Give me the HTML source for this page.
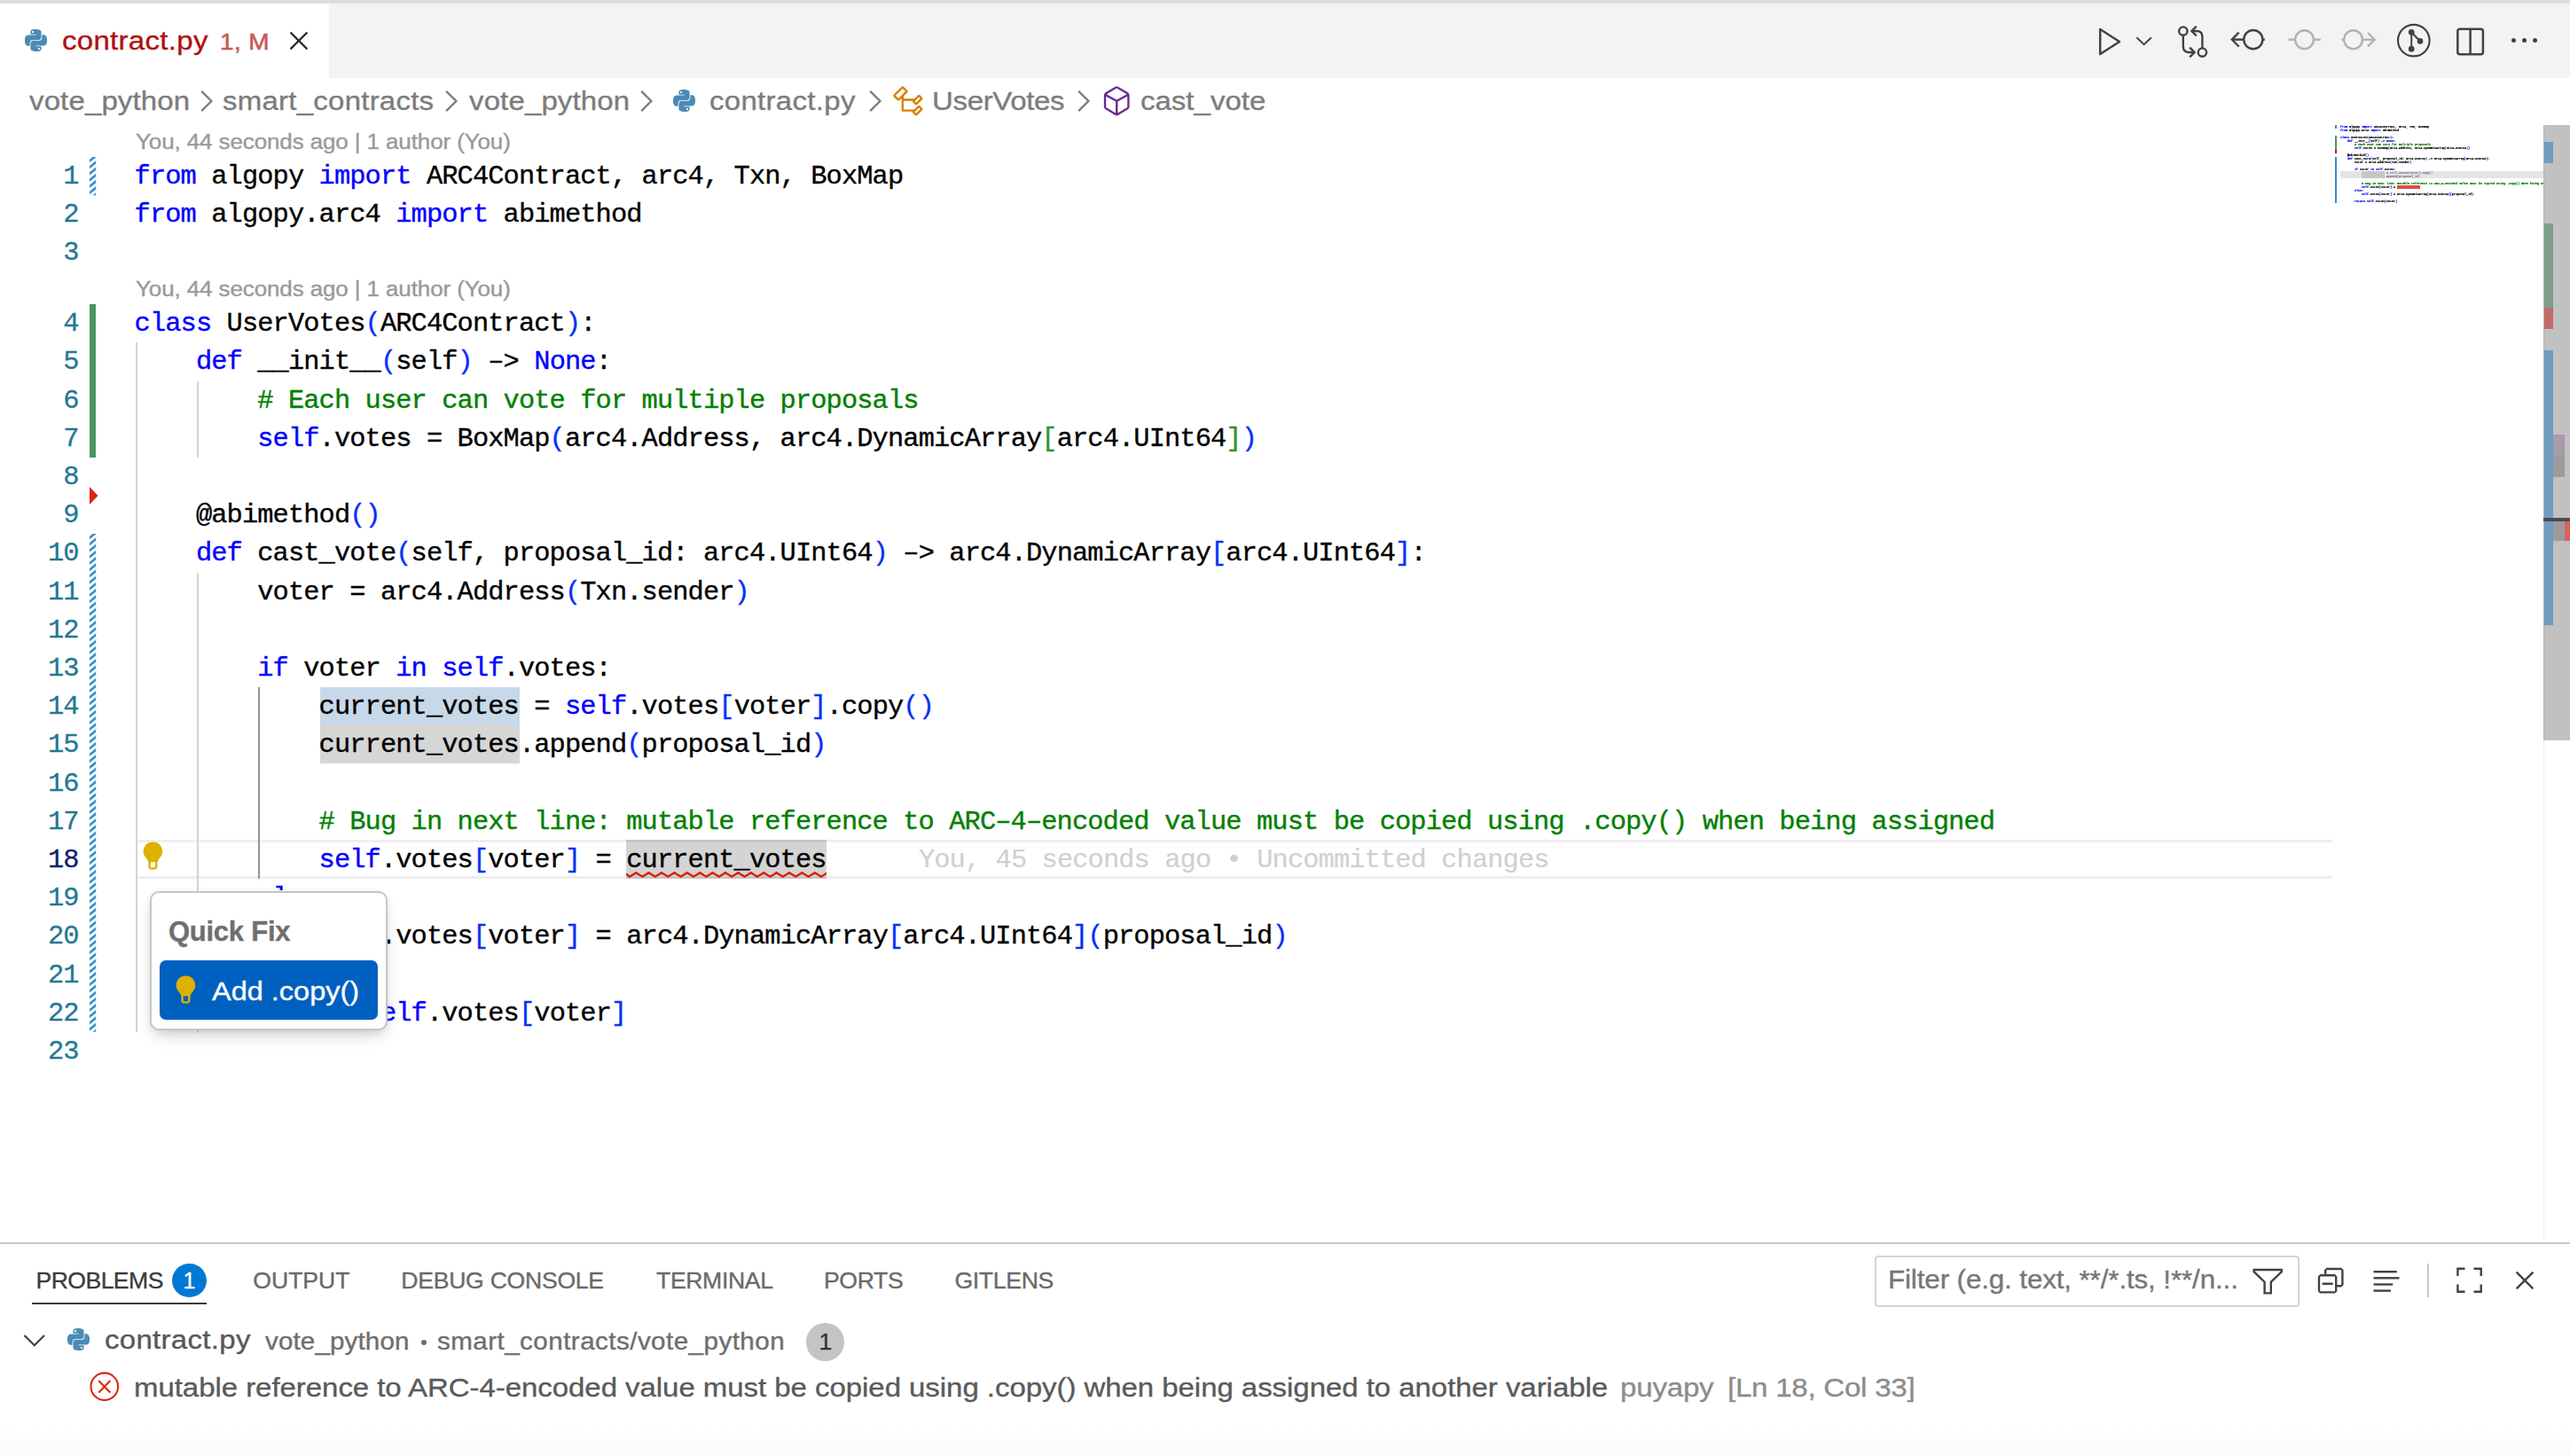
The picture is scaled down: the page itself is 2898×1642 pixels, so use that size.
<!DOCTYPE html>
<html><head><meta charset="utf-8"><title>contract.py</title>
<style>
html,body{margin:0;padding:0;background:#fff;}
body{width:2898px;height:1642px;overflow:hidden;position:relative;font-family:"Liberation Sans",sans-serif;}
.abs{position:absolute;}
.t{position:absolute;white-space:pre;line-height:1;-webkit-text-stroke:0.35px currentColor;}
.mono{font-family:"Liberation Mono",monospace;}
.cl{position:absolute;left:151.55px;height:43.2px;line-height:43.2px;white-space:pre;font-family:"Liberation Mono",monospace;font-size:30.4px;letter-spacing:-0.9030px;color:#000;-webkit-text-stroke:0.35px currentColor;}
.k{color:#0000ff}.c{color:#008000}.b1{color:#0431fa}.b2{color:#319331}
.ln{position:absolute;left:0;width:88.6px;text-align:right;height:43.2px;line-height:43.2px;font-family:"Liberation Mono",monospace;font-size:30.4px;letter-spacing:-0.9030px;color:#237893;-webkit-text-stroke:0.3px currentColor;}
svg{position:absolute;overflow:visible;}
</style></head><body>
<div class="abs" style="left:0;top:0;width:2898px;height:4px;background:#dcdcdc"></div>
<div class="abs" style="left:0;top:4px;width:2898px;height:84px;background:#f3f3f3"></div>
<div class="abs" style="left:0;top:4px;width:371px;height:84px;background:#fff"></div>
<svg style="left:28px;top:33px" width="25" height="25" viewBox="0 0 24 24"><path fill="#4b8bb5" d="M14.25.18l.9.2.73.26.59.3.45.32.34.34.25.34.16.33.1.3.04.26.02.2-.01.13V8.5l-.05.63-.13.55-.21.46-.26.38-.3.31-.33.25-.35.19-.35.14-.33.1-.3.07-.26.04-.21.02H8.77l-.69.05-.59.14-.5.22-.41.27-.33.32-.27.35-.2.36-.15.37-.1.35-.07.32-.04.27-.02.21v3.06H3.17l-.21-.03-.28-.07-.32-.12-.35-.18-.36-.26-.36-.36-.35-.46-.32-.59-.28-.73-.21-.88-.14-1.05-.05-1.23.06-1.22.16-1.04.24-.87.32-.71.36-.57.4-.44.42-.33.42-.24.4-.16.36-.1.32-.05.24-.01h.16l.06.01h8.16v-.83H6.18l-.01-2.75-.02-.37.05-.34.11-.31.17-.28.25-.26.31-.23.38-.2.44-.18.51-.15.58-.12.64-.1.71-.06.77-.04.84-.02 1.27.05zm-6.3 1.98l-.23.33-.08.41.08.41.23.34.33.22.41.09.41-.09.33-.22.23-.34.08-.41-.08-.41-.23-.33-.33-.22-.41-.09-.41.09zm13.09 3.95l.28.06.32.12.35.18.36.27.36.35.35.47.32.59.28.73.21.88.14 1.04.05 1.23-.06 1.23-.16 1.04-.24.86-.32.71-.36.57-.4.45-.42.33-.42.24-.4.16-.36.09-.32.05-.24.02-.16-.01h-8.22v.82h5.84l.01 2.76.02.36-.05.34-.11.31-.17.29-.25.25-.31.24-.38.2-.44.17-.51.15-.58.13-.64.09-.71.07-.77.04-.84.01-1.27-.04-1.07-.14-.9-.2-.73-.25-.59-.3-.45-.33-.34-.34-.25-.34-.16-.33-.1-.3-.04-.25-.02-.2.01-.13v-5.34l.05-.64.13-.54.21-.46.26-.38.3-.32.33-.24.35-.2.35-.14.33-.1.3-.06.26-.04.21-.02.13-.01h5.84l.69-.05.59-.14.5-.21.41-.28.33-.32.27-.35.2-.36.15-.36.1-.35.07-.32.04-.28.02-.21V6.07h2.09l.14.01zm-6.47 14.25l-.23.33-.08.41.08.41.23.33.33.23.41.08.41-.08.33-.23.23-.33.08-.41-.08-.41-.23-.33-.33-.23-.41-.08-.41.08z"/></svg>
<div class="t " style="left:70.3px;top:31.10px;font-size:30.36px;color:#b01011;transform-origin:0 0;transform:scaleX(1.0870);letter-spacing:0.276px;">contract.py</div>
<div class="t " style="left:247.8px;top:34.99px;font-size:25.76px;color:#c65b59;transform-origin:0 0;transform:scaleX(1.0870);letter-spacing:0.368px;-webkit-text-stroke:0.55px #c65b59;">1, M</div>
<svg style="left:318.1px;top:26.8px" width="37.9" height="37.9" viewBox="0 0 16 16"><path fill="#2b2b2b" fill-rule="evenodd" clip-rule="evenodd" d="M8 8.707l3.646 3.647.708-.707L8.707 8l3.647-3.646-.707-.708L8 7.293 4.354 3.646l-.707.708L7.293 8l-3.646 3.646.707.708L8 8.707z" /></svg>
<div class="t " style="left:32.5px;top:98.50px;font-size:30.36px;color:#7c7c7c;transform-origin:0 0;transform:scaleX(1.0870);letter-spacing:0.120px;">vote_python</div>
<div class="t " style="left:251.2px;top:98.50px;font-size:30.36px;color:#7c7c7c;transform-origin:0 0;transform:scaleX(1.0870);letter-spacing:0.221px;">smart_contracts</div>
<div class="t " style="left:529.3px;top:98.50px;font-size:30.36px;color:#7c7c7c;transform-origin:0 0;transform:scaleX(1.0870);letter-spacing:0.120px;">vote_python</div>
<svg style="left:758.5px;top:101px" width="25" height="25" viewBox="0 0 24 24"><path fill="#4b8bb5" d="M14.25.18l.9.2.73.26.59.3.45.32.34.34.25.34.16.33.1.3.04.26.02.2-.01.13V8.5l-.05.63-.13.55-.21.46-.26.38-.3.31-.33.25-.35.19-.35.14-.33.1-.3.07-.26.04-.21.02H8.77l-.69.05-.59.14-.5.22-.41.27-.33.32-.27.35-.2.36-.15.37-.1.35-.07.32-.04.27-.02.21v3.06H3.17l-.21-.03-.28-.07-.32-.12-.35-.18-.36-.26-.36-.36-.35-.46-.32-.59-.28-.73-.21-.88-.14-1.05-.05-1.23.06-1.22.16-1.04.24-.87.32-.71.36-.57.4-.44.42-.33.42-.24.4-.16.36-.1.32-.05.24-.01h.16l.06.01h8.16v-.83H6.18l-.01-2.75-.02-.37.05-.34.11-.31.17-.28.25-.26.31-.23.38-.2.44-.18.51-.15.58-.12.64-.1.71-.06.77-.04.84-.02 1.27.05zm-6.3 1.98l-.23.33-.08.41.08.41.23.34.33.22.41.09.41-.09.33-.22.23-.34.08-.41-.08-.41-.23-.33-.33-.22-.41-.09-.41.09zm13.09 3.95l.28.06.32.12.35.18.36.27.36.35.35.47.32.59.28.73.21.88.14 1.04.05 1.23-.06 1.23-.16 1.04-.24.86-.32.71-.36.57-.4.45-.42.33-.42.24-.4.16-.36.09-.32.05-.24.02-.16-.01h-8.22v.82h5.84l.01 2.76.02.36-.05.34-.11.31-.17.29-.25.25-.31.24-.38.2-.44.17-.51.15-.58.13-.64.09-.71.07-.77.04-.84.01-1.27-.04-1.07-.14-.9-.2-.73-.25-.59-.3-.45-.33-.34-.34-.25-.34-.16-.33-.1-.3-.04-.25-.02-.2.01-.13v-5.34l.05-.64.13-.54.21-.46.26-.38.3-.32.33-.24.35-.2.35-.14.33-.1.3-.06.26-.04.21-.02.13-.01h5.84l.69-.05.59-.14.5-.21.41-.28.33-.32.27-.35.2-.36.15-.36.1-.35.07-.32.04-.28.02-.21V6.07h2.09l.14.01zm-6.47 14.25l-.23.33-.08.41.08.41.23.33.33.23.41.08.41-.08.33-.23.23-.33.08-.41-.08-.41-.23-.33-.33-.23-.41-.08-.41.08z"/></svg>
<div class="t " style="left:800.4px;top:98.50px;font-size:30.36px;color:#7c7c7c;transform-origin:0 0;transform:scaleX(1.0870);letter-spacing:0.276px;">contract.py</div>
<div class="t " style="left:1050.5px;top:98.50px;font-size:30.36px;color:#7c7c7c;transform-origin:0 0;transform:scaleX(1.0870);letter-spacing:-0.313px;">UserVotes</div>
<div class="t " style="left:1286px;top:98.50px;font-size:30.36px;color:#7c7c7c;transform-origin:0 0;transform:scaleX(1.0870);">cast_vote</div>
<svg style="left:225.6px;top:100px" width="14" height="28" viewBox="0 0 14 28"><path d="M1.2 2.9 L12.4 14 L1.2 25.1" fill="none" stroke="#7c7c7c" stroke-width="2.3"/></svg>
<svg style="left:502.4px;top:100px" width="14" height="28" viewBox="0 0 14 28"><path d="M1.2 2.9 L12.4 14 L1.2 25.1" fill="none" stroke="#7c7c7c" stroke-width="2.3"/></svg>
<svg style="left:722.4px;top:100px" width="14" height="28" viewBox="0 0 14 28"><path d="M1.2 2.9 L12.4 14 L1.2 25.1" fill="none" stroke="#7c7c7c" stroke-width="2.3"/></svg>
<svg style="left:980px;top:100px" width="14" height="28" viewBox="0 0 14 28"><path d="M1.2 2.9 L12.4 14 L1.2 25.1" fill="none" stroke="#7c7c7c" stroke-width="2.3"/></svg>
<svg style="left:1214.5px;top:100px" width="14" height="28" viewBox="0 0 14 28"><path d="M1.2 2.9 L12.4 14 L1.2 25.1" fill="none" stroke="#7c7c7c" stroke-width="2.3"/></svg>
<svg style="left:1005px;top:95px" width="38.4" height="38.4" viewBox="0 0 16 16"><path fill="#d67e00" fill-rule="evenodd" clip-rule="evenodd" d="M11.34 9.71h.71l2.67-2.67v-.71L13.38 5h-.7l-1.82 1.81h-5V5.56l1.86-1.85V3l-2-2H5L1 5v.71l2 2h.71l1.14-1.15v5.79l.5.5H10v.52l1.33 1.34h.71l2.67-2.67v-.71L13.37 10h-.7l-1.86 1.85h-5v-4H10v.48l1.34 1.38zm1.69-3.65l.63.63-2 2-.63-.63 2-2zm0 5l.63.63-2 2-.63-.63 2-2zM3.35 6.65l-1.29-1.3 3.29-3.29 1.3 1.29-3.3 3.3z" /></svg>
<svg style="left:1240px;top:94.5px" width="38.4" height="38.4" viewBox="0 0 16 16"><path fill="#652d90" fill-rule="evenodd" clip-rule="evenodd" d="M13.51 4l-5-3h-1l-5 3-.49.86v6l.49.85 5 3h1l5-3 .49-.85v-6L13.51 4zm-6 9.56l-4.5-2.7V5.7l4.5 2.45v5.41zM3.27 4.7l4.74-2.84 4.74 2.84-4.74 2.59L3.27 4.7zm9.74 6.16l-4.5 2.7V8.15l4.5-2.45v5.16z" /></svg>
<svg style="left:2364px;top:28px" width="32" height="38" viewBox="0 0 32 38"><path d="M4.2 5 L26 19 L4.2 33 Z" fill="none" stroke="#424242" stroke-width="2.5" stroke-linejoin="round"/></svg>
<svg style="left:2407px;top:40px" width="22" height="14" viewBox="0 0 22 14"><path d="M2.4 2.2 L10.6 10.2 L18.9 2.2" fill="none" stroke="#424242" stroke-width="1.9"/></svg>
<svg style="left:2452px;top:26px" width="42" height="42" viewBox="0 0 42 42"><g fill="none" stroke="#424242" stroke-width="2.4">
<circle cx="9.8" cy="9.1" r="4.7"/><circle cx="31.4" cy="33.1" r="4.7"/>
<path d="M9.8 13.8 V26 Q9.8 33 16.5 33 H21.5"/><path d="M17.2 27.6 L22.6 33 L17.2 38.4"/>
<path d="M31.4 28.4 V15.6 Q31.4 9 25 9 H20.5"/><path d="M24.8 3.6 L19.4 9 L24.8 14.4"/></g></svg>
<svg style="left:2512px;top:28px" width="46" height="34" viewBox="0 0 46 34"><g fill="none" stroke="#424242" stroke-width="2.4">
<circle cx="28.8" cy="16.6" r="10.6"/><path d="M5 16.6 H18.2"/><path d="M12.6 8.7 L4.8 16.6 L12.6 24.5"/><path d="M39.4 16.6 H41.8"/></g></svg>
<svg style="left:2578px;top:28px" width="42" height="34" viewBox="0 0 42 34"><g fill="none" stroke="#b2b2b2" stroke-width="2.4">
<circle cx="20.5" cy="16.7" r="10.4"/><path d="M2.5 16.7 H10"/><path d="M31 16.7 H38.8"/></g></svg>
<svg style="left:2638px;top:28px" width="46" height="34" viewBox="0 0 46 34"><g fill="none" stroke="#b2b2b2" stroke-width="2.4">
<circle cx="15.6" cy="16.7" r="10.4"/><path d="M2.2 16.7 H5"/><path d="M26 16.7 H39.5"/><path d="M32 9 L39.8 16.7 L32 24.4"/></g></svg>
<svg style="left:2701px;top:25px" width="42" height="42" viewBox="0 0 42 42"><g fill="none" stroke="#424242" stroke-width="2.2">
<circle cx="20.8" cy="20.6" r="17.8"/><path d="M18.2 11.5 V30" stroke-width="2"/><path d="M18.8 12 L27.5 21" stroke-width="2"/></g>
<circle cx="18.2" cy="11.3" r="3.4" fill="#424242"/><circle cx="18.2" cy="30.2" r="3.4" fill="#424242"/><circle cx="28" cy="21.4" r="3.3" fill="#424242"/></svg>
<svg style="left:2768px;top:29px" width="36" height="36" viewBox="0 0 36 36"><g fill="none" stroke="#424242" stroke-width="2.5">
<rect x="3.3" y="3.7" width="28.6" height="28.6" rx="2.5"/><path d="M17.6 3.7 V32.3"/></g></svg>
<div class="abs" style="left:2832.4px;top:43.2px;width:5px;height:5px;border-radius:50%;background:#424242"></div>
<div class="abs" style="left:2844.4px;top:43.2px;width:5px;height:5px;border-radius:50%;background:#424242"></div>
<div class="abs" style="left:2856.4px;top:43.2px;width:5px;height:5px;border-radius:50%;background:#424242"></div>
<div class="t " style="left:152.9px;top:147.55px;font-size:23.92px;color:#999999;transform-origin:0 0;transform:scaleX(1.0870);letter-spacing:-0.101px;">You, 44 seconds ago | 1 author (You)</div>
<div class="t " style="left:152.9px;top:313.75px;font-size:23.92px;color:#999999;transform-origin:0 0;transform:scaleX(1.0870);letter-spacing:-0.101px;">You, 44 seconds ago | 1 author (You)</div>
<div class="abs" style="left:361.0px;top:774.9px;width:224.9px;height:43.3px;background:#c7d9e8"></div>
<div class="abs" style="left:361.0px;top:818.2px;width:224.9px;height:43.0px;background:#d6d6d6"></div>
<div class="abs" style="left:706.0px;top:946.9px;width:226px;height:43.8px;background:#d4d4d4"></div>
<div class="abs" style="left:153.5px;top:947.0px;width:2476.5px;height:43.8px;box-sizing:border-box;border-top:3.4px solid rgba(0,0,0,0.067);border-bottom:3.2px solid rgba(0,0,0,0.067)"></div>
<div class="abs" style="left:152.5px;top:386.3px;width:2px;height:777.6px;background:#d3d3d3"></div>
<div class="abs" style="left:221.6px;top:429.5px;width:2px;height:86.4px;background:#d3d3d3"></div>
<div class="abs" style="left:221.6px;top:645.5px;width:2px;height:518.4px;background:#d3d3d3"></div>
<div class="abs" style="left:290.8px;top:775.1px;width:2.2px;height:216.0px;background:#939393"></div>
<svg width="0" height="0" style="left:0;top:0"><defs><pattern id="hat" width="7.2" height="7.2" patternUnits="userSpaceOnUse"><path d="M0 2.85 L7.2 -2.85 L7.2 0.4 L0 6.15 Z M0 10.05 L7.2 4.35 L7.2 7.6 L0 13.35 Z" fill="#2986c9"/></pattern></defs></svg>
<svg style="left:100.9px;top:177.0px" width="7.2" height="43.2"><rect width="7.2" height="43.2" fill="url(#hat)"/></svg>
<svg style="left:100.9px;top:602.0px" width="7.2" height="561.6"><rect width="7.2" height="561.6" fill="url(#hat)"/></svg>
<div class="abs" style="left:101.2px;top:343.1px;width:7px;height:172.8px;background:#48985d"></div>
<svg style="left:101px;top:549.1px" width="10" height="20" viewBox="0 0 10 20"><path d="M0 0 L9.5 10 L0 20 Z" fill="#dc2513"/></svg>
<div class="ln" style="top:178.0px;color:#237893">1</div>
<div class="cl" style="top:178.0px"><span class="k">from</span> algopy <span class="k">import</span> ARC4Contract, arc4, Txn, BoxMap</div>
<div class="ln" style="top:221.2px;color:#237893">2</div>
<div class="cl" style="top:221.2px"><span class="k">from</span> algopy.arc4 <span class="k">import</span> abimethod</div>
<div class="ln" style="top:264.4px;color:#237893">3</div>
<div class="ln" style="top:344.1px;color:#237893">4</div>
<div class="cl" style="top:344.1px"><span class="k">class</span> UserVotes<span class="b1">(</span>ARC4Contract<span class="b1">)</span>:</div>
<div class="ln" style="top:387.3px;color:#237893">5</div>
<div class="cl" style="top:387.3px">    <span class="k">def</span> __init__<span class="b1">(</span>self<span class="b1">)</span> –&gt; <span class="k">None</span>:</div>
<div class="ln" style="top:430.5px;color:#237893">6</div>
<div class="cl" style="top:430.5px">        <span class="c"># Each user can vote for multiple proposals</span></div>
<div class="ln" style="top:473.7px;color:#237893">7</div>
<div class="cl" style="top:473.7px">        <span class="k">self</span>.votes = BoxMap<span class="b1">(</span>arc4.Address, arc4.DynamicArray<span class="b2">[</span>arc4.UInt64<span class="b2">]</span><span class="b1">)</span></div>
<div class="ln" style="top:516.9px;color:#237893">8</div>
<div class="ln" style="top:560.1px;color:#237893">9</div>
<div class="cl" style="top:560.1px">    @abimethod<span class="b1">()</span></div>
<div class="ln" style="top:603.3px;color:#237893">10</div>
<div class="cl" style="top:603.3px">    <span class="k">def</span> cast_vote<span class="b1">(</span>self, proposal_id: arc4.UInt64<span class="b1">)</span> –&gt; arc4.DynamicArray<span class="b1">[</span>arc4.UInt64<span class="b1">]</span>:</div>
<div class="ln" style="top:646.5px;color:#237893">11</div>
<div class="cl" style="top:646.5px">        voter = arc4.Address<span class="b1">(</span>Txn.sender<span class="b1">)</span></div>
<div class="ln" style="top:689.7px;color:#237893">12</div>
<div class="ln" style="top:732.9px;color:#237893">13</div>
<div class="cl" style="top:732.9px">        <span class="k">if</span> voter <span class="k">in</span> <span class="k">self</span>.votes:</div>
<div class="ln" style="top:776.1px;color:#237893">14</div>
<div class="cl" style="top:776.1px">            current_votes = <span class="k">self</span>.votes<span class="b1">[</span>voter<span class="b1">]</span>.copy<span class="b1">()</span></div>
<div class="ln" style="top:819.3px;color:#237893">15</div>
<div class="cl" style="top:819.3px">            current_votes.append<span class="b1">(</span>proposal_id<span class="b1">)</span></div>
<div class="ln" style="top:862.5px;color:#237893">16</div>
<div class="ln" style="top:905.7px;color:#237893">17</div>
<div class="cl" style="top:905.7px">            <span class="c"># Bug in next line: mutable reference to ARC–4–encoded value must be copied using .copy() when being assigned</span></div>
<div class="ln" style="top:948.9px;color:#0b216f">18</div>
<div class="cl" style="top:948.9px">            <span class="k">self</span>.votes<span class="b1">[</span>voter<span class="b1">]</span> = current_votes</div>
<div class="ln" style="top:992.1px;color:#237893">19</div>
<div class="cl" style="top:992.1px;overflow:hidden;height:12.4px">        <span class="k">else</span>:</div>
<div class="ln" style="top:1035.3px;color:#237893">20</div>
<div class="cl" style="top:1035.3px">            <span class="k">self</span>.votes<span class="b1">[</span>voter<span class="b1">]</span> = arc4.DynamicArray<span class="b1">[</span>arc4.UInt64<span class="b1">]</span><span class="b1">(</span>proposal_id<span class="b1">)</span></div>
<div class="ln" style="top:1078.5px;color:#237893">21</div>
<div class="ln" style="top:1121.7px;color:#237893">22</div>
<div class="cl" style="top:1121.7px">        <span class="k">return</span> <span class="k">self</span>.votes<span class="b1">[</span>voter<span class="b1">]</span></div>
<div class="ln" style="top:1164.9px;color:#237893">23</div>
<div class="cl" style="top:948.9px;left:1035.9px;color:#d0d0d0;-webkit-text-stroke:0.2px #d0d0d0">You, 45 seconds ago • Uncommitted changes</div>
<svg style="left:706.0px;top:982px;overflow:hidden" width="226.0" height="9" viewBox="0 0 226.0 9"><path d="M0 3.5 L4.0 6.7 L11.2 2.2 L18.4 6.7 L25.6 2.2 L32.8 6.7 L40.0 2.2 L47.2 6.7 L54.4 2.2 L61.6 6.7 L68.8 2.2 L76.0 6.7 L83.2 2.2 L90.4 6.7 L97.6 2.2 L104.8 6.7 L112.0 2.2 L119.2 6.7 L126.4 2.2 L133.6 6.7 L140.8 2.2 L148.0 6.7 L155.2 2.2 L162.4 6.7 L169.6 2.2 L176.8 6.7 L184.0 2.2 L191.2 6.7 L198.4 2.2 L205.6 6.7 L212.8 2.2 L220.0 6.7 L227.2 2.2" fill="none" stroke="#de1c02" stroke-width="2.4" stroke-linejoin="miter"/></svg>
<svg style="left:152px;top:946.5px" width="38.4" height="38.4" viewBox="0 0 16 16"><path fill="#ddb100" fill-rule="evenodd" clip-rule="evenodd" d="M11.67 8.658a3.661 3.661 0 0 0-.781 1.114 3.28 3.28 0 0 0-.268 1.329v1.6a1.304 1.304 0 0 1-.794 1.197 1.282 1.282 0 0 1-.509.102H7.712a1.285 1.285 0 0 1-.922-.379 1.303 1.303 0 0 1-.38-.92v-1.6c0-.479-.092-.921-.274-1.329a3.556 3.556 0 0 0-.776-1.114 4.689 4.689 0 0 1-1.006-1.437A4.187 4.187 0 0 1 4 5.5a4.432 4.432 0 0 1 .616-2.27c.197-.336.432-.64.705-.914a4.6 4.6 0 0 1 .911-.702c.338-.196.7-.348 1.084-.454a4.45 4.45 0 0 1 1.2-.16 4.476 4.476 0 0 1 2.276.614 4.475 4.475 0 0 1 1.622 1.616 4.438 4.438 0 0 1 .616 2.27c0 .617-.117 1.191-.353 1.721a4.69 4.69 0 0 1-1.006 1.437zM9.623 10.5H7.409v2.201c0 .081.028.15.09.212a.29.29 0 0 0 .213.09h1.606a.289.289 0 0 0 .213-.09.286.286 0 0 0 .09-.212V10.5z" /></svg>
<div class="abs" style="left:168.7px;top:1004.8px;width:268.2px;height:156.8px;box-sizing:border-box;background:#fff;border:2px solid #c6c6c6;border-radius:10px;box-shadow:0 9px 18px -5px rgba(0,0,0,0.22),0 1px 7px rgba(0,0,0,0.06)"></div>
<div class="t " style="left:189.9px;top:1035.06px;font-size:31.00px;color:#6f6f6f;font-weight:bold;letter-spacing:-0.240px;">Quick Fix</div>
<div class="abs" style="left:180px;top:1083px;width:246px;height:66.6px;background:#0060c0;border-radius:7px"></div>
<svg style="left:189.3px;top:1097.6px" width="38.4" height="38.4" viewBox="0 0 16 16"><path fill="#ddb100" fill-rule="evenodd" clip-rule="evenodd" d="M11.67 8.658a3.661 3.661 0 0 0-.781 1.114 3.28 3.28 0 0 0-.268 1.329v1.6a1.304 1.304 0 0 1-.794 1.197 1.282 1.282 0 0 1-.509.102H7.712a1.285 1.285 0 0 1-.922-.379 1.303 1.303 0 0 1-.38-.92v-1.6c0-.479-.092-.921-.274-1.329a3.556 3.556 0 0 0-.776-1.114 4.689 4.689 0 0 1-1.006-1.437A4.187 4.187 0 0 1 4 5.5a4.432 4.432 0 0 1 .616-2.27c.197-.336.432-.64.705-.914a4.6 4.6 0 0 1 .911-.702c.338-.196.7-.348 1.084-.454a4.45 4.45 0 0 1 1.2-.16 4.476 4.476 0 0 1 2.276.614 4.475 4.475 0 0 1 1.622 1.616 4.438 4.438 0 0 1 .616 2.27c0 .617-.117 1.191-.353 1.721a4.69 4.69 0 0 1-1.006 1.437zM9.623 10.5H7.409v2.201c0 .081.028.15.09.212a.29.29 0 0 0 .213.09h1.606a.289.289 0 0 0 .213-.09.286.286 0 0 0 .09-.212V10.5z" /></svg>
<div class="t " style="left:238.7px;top:1102.71px;font-size:30.23px;color:#ffffff;transform-origin:0 0;transform:scaleX(1.0753);">Add .copy()</div>
<div class="abs" style="left:2639px;top:193px;width:229px;height:8px;background:#e4e4e4"></div>
<div class="abs" style="left:2663px;top:193px;width:26px;height:8px;background:#c6c6c6"></div>
<div class="abs" style="left:2639px;top:141px;width:0;height:0;transform-origin:0 0;transform:scale(0.11534,0.09259)">
<div class="cl" style="left:0;top:0.0px;-webkit-text-stroke:2.2px currentColor"><span class="k">from</span> algopy <span class="k">import</span> ARC4Contract, arc4, Txn, BoxMap</div>
<div class="cl" style="left:0;top:43.2px;-webkit-text-stroke:2.2px currentColor"><span class="k">from</span> algopy.arc4 <span class="k">import</span> abimethod</div>
<div class="cl" style="left:0;top:129.6px;-webkit-text-stroke:2.2px currentColor"><span class="k">class</span> UserVotes<span class="b1">(</span>ARC4Contract<span class="b1">)</span>:</div>
<div class="cl" style="left:0;top:172.8px;-webkit-text-stroke:2.2px currentColor">    <span class="k">def</span> __init__<span class="b1">(</span>self<span class="b1">)</span> –&gt; <span class="k">None</span>:</div>
<div class="cl" style="left:0;top:216.0px;-webkit-text-stroke:2.2px currentColor">        <span class="c"># Each user can vote for multiple proposals</span></div>
<div class="cl" style="left:0;top:259.2px;-webkit-text-stroke:2.2px currentColor">        <span class="k">self</span>.votes = BoxMap<span class="b1">(</span>arc4.Address, arc4.DynamicArray<span class="b2">[</span>arc4.UInt64<span class="b2">]</span><span class="b1">)</span></div>
<div class="cl" style="left:0;top:345.6px;-webkit-text-stroke:2.2px currentColor">    @abimethod<span class="b1">()</span></div>
<div class="cl" style="left:0;top:388.8px;-webkit-text-stroke:2.2px currentColor">    <span class="k">def</span> cast_vote<span class="b1">(</span>self, proposal_id: arc4.UInt64<span class="b1">)</span> –&gt; arc4.DynamicArray<span class="b1">[</span>arc4.UInt64<span class="b1">]</span>:</div>
<div class="cl" style="left:0;top:432.0px;-webkit-text-stroke:2.2px currentColor">        voter = arc4.Address<span class="b1">(</span>Txn.sender<span class="b1">)</span></div>
<div class="cl" style="left:0;top:518.4px;-webkit-text-stroke:2.2px currentColor">        <span class="k">if</span> voter <span class="k">in</span> <span class="k">self</span>.votes:</div>
<div class="cl" style="left:0;top:561.6px;-webkit-text-stroke:2.2px currentColor;opacity:0.45">            current_votes = <span class="k">self</span>.votes<span class="b1">[</span>voter<span class="b1">]</span>.copy<span class="b1">()</span></div>
<div class="cl" style="left:0;top:604.8px;-webkit-text-stroke:2.2px currentColor;opacity:0.45">            current_votes.append<span class="b1">(</span>proposal_id<span class="b1">)</span></div>
<div class="cl" style="left:0;top:691.2px;-webkit-text-stroke:2.2px currentColor">            <span class="c"># Bug in next line: mutable reference to ARC–4–encoded value must be copied using .copy() when being assigned</span></div>
<div class="cl" style="left:0;top:734.4px;-webkit-text-stroke:2.2px currentColor">            <span class="k">self</span>.votes<span class="b1">[</span>voter<span class="b1">]</span> = current_votes</div>
<div class="cl" style="left:0;top:777.6px;-webkit-text-stroke:2.2px currentColor">        <span class="k">else</span>:</div>
<div class="cl" style="left:0;top:820.8px;-webkit-text-stroke:2.2px currentColor">            <span class="k">self</span>.votes<span class="b1">[</span>voter<span class="b1">]</span> = arc4.DynamicArray<span class="b1">[</span>arc4.UInt64<span class="b1">]</span><span class="b1">(</span>proposal_id<span class="b1">)</span></div>
<div class="cl" style="left:0;top:907.2px;-webkit-text-stroke:2.2px currentColor">        <span class="k">return</span> <span class="k">self</span>.votes<span class="b1">[</span>voter<span class="b1">]</span></div>
</div>
<div class="abs" style="left:2663px;top:193px;width:26px;height:8px;background:#c6c6c6"></div>
<div class="abs" style="left:2703px;top:209px;width:26px;height:4px;background:#e24848"></div>
<div class="abs" style="left:2633px;top:141px;width:2px;height:4px;background:#2b8fd0"></div>
<div class="abs" style="left:2633px;top:153px;width:2px;height:16px;background:#48985d"></div>
<div class="abs" style="left:2633px;top:169px;width:2px;height:4px;background:#b01f0f"></div>
<div class="abs" style="left:2633px;top:177px;width:2px;height:52px;background:#2b8fd0"></div>
<div class="abs" style="left:2868px;top:141px;width:30px;height:1260px;background:#fff;border-left:1px solid #eeeeee;box-sizing:border-box"></div>
<div class="abs" style="left:2868px;top:141px;width:30px;height:694px;background:#c1c1c1"></div>
<div class="abs" style="left:2868px;top:141px;width:1px;height:694px;background:#b4b4b4"></div>
<div class="abs" style="left:2869px;top:160px;width:10.4px;height:24px;background:#6f9cbf"></div>
<div class="abs" style="left:2869px;top:252px;width:10.4px;height:95px;background:#7b9f8b"></div>
<div class="abs" style="left:2869px;top:347px;width:10.4px;height:24px;background:#c26a68"></div>
<div class="abs" style="left:2869px;top:395px;width:10.4px;height:310px;background:#6f9cbf"></div>
<div class="abs" style="left:2879.4px;top:489.6px;width:12.3px;height:24px;background:#a99aac"></div>
<div class="abs" style="left:2879.4px;top:513.6px;width:12.3px;height:24.4px;background:#9c9c9c"></div>
<div class="abs" style="left:2879.4px;top:588px;width:12.3px;height:21.8px;background:#9c9c9c"></div>
<div class="abs" style="left:2891.7px;top:588px;width:6.3px;height:21.8px;background:#d8615d"></div>
<div class="abs" style="left:2868px;top:584px;width:30px;height:4px;background:#4b4b55"></div>
<div class="abs" style="left:0;top:1401px;width:2898px;height:241px;background:#fff"></div>
<div class="abs" style="left:0;top:1401px;width:2898px;height:2px;background:#c9c9c9"></div>
<div class="abs" style="left:0;top:1610px;width:2898px;height:32px;background:linear-gradient(#fff,#fafafa)"></div>
<div class="t " style="left:40.5px;top:1430.68px;font-size:26.60px;color:#3b3b3b;letter-spacing:-0.560px;">PROBLEMS</div>
<div class="abs" style="left:194px;top:1425px;width:39px;height:38px;border-radius:50%;background:#0078d4"></div>
<div class="t " style="left:206.5px;top:1431.84px;font-size:25.00px;color:#fff;">1</div>
<div class="abs" style="left:36.2px;top:1469px;width:196.8px;height:2.2px;background:#3a3a3a"></div>
<div class="t " style="left:285.3px;top:1430.68px;font-size:26.60px;color:#6a6a6a;letter-spacing:-0.020px;">OUTPUT</div>
<div class="t " style="left:452.3px;top:1430.68px;font-size:26.60px;color:#6a6a6a;letter-spacing:-0.270px;">DEBUG CONSOLE</div>
<div class="t " style="left:740px;top:1430.68px;font-size:26.60px;color:#6a6a6a;letter-spacing:-0.360px;">TERMINAL</div>
<div class="t " style="left:929px;top:1430.68px;font-size:26.60px;color:#6a6a6a;letter-spacing:-0.370px;">PORTS</div>
<div class="t " style="left:1076.4px;top:1430.68px;font-size:26.60px;color:#6a6a6a;letter-spacing:-0.320px;">GITLENS</div>
<svg style="left:26px;top:1504px" width="26" height="16" viewBox="0 0 26 16"><path d="M1.5 2 L12.8 13.2 L24 2" fill="none" stroke="#424242" stroke-width="2.3"/></svg>
<svg style="left:75.7px;top:1498px" width="25" height="25" viewBox="0 0 24 24"><path fill="#4b8bb5" d="M14.25.18l.9.2.73.26.59.3.45.32.34.34.25.34.16.33.1.3.04.26.02.2-.01.13V8.5l-.05.63-.13.55-.21.46-.26.38-.3.31-.33.25-.35.19-.35.14-.33.1-.3.07-.26.04-.21.02H8.77l-.69.05-.59.14-.5.22-.41.27-.33.32-.27.35-.2.36-.15.37-.1.35-.07.32-.04.27-.02.21v3.06H3.17l-.21-.03-.28-.07-.32-.12-.35-.18-.36-.26-.36-.36-.35-.46-.32-.59-.28-.73-.21-.88-.14-1.05-.05-1.23.06-1.22.16-1.04.24-.87.32-.71.36-.57.4-.44.42-.33.42-.24.4-.16.36-.1.32-.05.24-.01h.16l.06.01h8.16v-.83H6.18l-.01-2.75-.02-.37.05-.34.11-.31.17-.28.25-.26.31-.23.38-.2.44-.18.51-.15.58-.12.64-.1.71-.06.77-.04.84-.02 1.27.05zm-6.3 1.98l-.23.33-.08.41.08.41.23.34.33.22.41.09.41-.09.33-.22.23-.34.08-.41-.08-.41-.23-.33-.33-.22-.41-.09-.41.09zm13.09 3.95l.28.06.32.12.35.18.36.27.36.35.35.47.32.59.28.73.21.88.14 1.04.05 1.23-.06 1.23-.16 1.04-.24.86-.32.71-.36.57-.4.45-.42.33-.42.24-.4.16-.36.09-.32.05-.24.02-.16-.01h-8.22v.82h5.84l.01 2.76.02.36-.05.34-.11.31-.17.29-.25.25-.31.24-.38.2-.44.17-.51.15-.58.13-.64.09-.71.07-.77.04-.84.01-1.27-.04-1.07-.14-.9-.2-.73-.25-.59-.3-.45-.33-.34-.34-.25-.34-.16-.33-.1-.3-.04-.25-.02-.2.01-.13v-5.34l.05-.64.13-.54.21-.46.26-.38.3-.32.33-.24.35-.2.35-.14.33-.1.3-.06.26-.04.21-.02.13-.01h5.84l.69-.05.59-.14.5-.21.41-.28.33-.32.27-.35.2-.36.15-.36.1-.35.07-.32.04-.28.02-.21V6.07h2.09l.14.01zm-6.47 14.25l-.23.33-.08.41.08.41.23.33.33.23.41.08.41-.08.33-.23.23-.33.08-.41-.08-.41-.23-.33-.33-.23-.41-.08-.41.08z"/></svg>
<div class="t " style="left:118px;top:1496.40px;font-size:30.36px;color:#585858;transform-origin:0 0;transform:scaleX(1.0870);letter-spacing:0.276px;">contract.py</div>
<div class="t " style="left:299.3px;top:1499.05px;font-size:27.23px;color:#6e6e6e;transform-origin:0 0;transform:scaleX(1.0870);letter-spacing:0.110px;">vote_python</div>
<div class="abs" style="left:475.2px;top:1510.8px;width:6px;height:6px;border-radius:50%;background:#6e6e6e"></div>
<div class="t " style="left:493.2px;top:1499.05px;font-size:27.23px;color:#6e6e6e;transform-origin:0 0;transform:scaleX(1.0870);letter-spacing:0.414px;">smart_contracts/vote_python</div>
<div class="abs" style="left:909px;top:1492px;width:42.5px;height:42.5px;border-radius:50%;background:#c4c4c4"></div>
<div class="t " style="left:923.5px;top:1500.17px;font-size:26.50px;color:#333;">1</div>
<svg style="left:100.8px;top:1547px" width="34" height="34" viewBox="0 0 34 34"><g fill="none" stroke="#dc2510" stroke-width="2.1"><circle cx="16.8" cy="16.7" r="15.3"/><path d="M10.2 10 L23.4 23.4 M23.4 10 L10.2 23.4"/></g></svg>
<div class="t " style="left:150.5px;top:1549.50px;font-size:30.36px;color:#5a5a5a;transform-origin:0 0;transform:scaleX(1.0870);letter-spacing:-0.046px;">mutable reference to ARC-4-encoded value must be copied using .copy() when being assigned to another variable</div>
<div class="t " style="left:1826.6px;top:1549.50px;font-size:30.36px;color:#8c8c8c;transform-origin:0 0;transform:scaleX(1.0870);letter-spacing:-0.147px;">puyapy</div>
<div class="t " style="left:1948.3px;top:1549.50px;font-size:30.36px;color:#8c8c8c;transform-origin:0 0;transform:scaleX(1.0870);letter-spacing:-0.202px;">[Ln 18, Col 33]</div>
<div class="abs" style="left:2113.5px;top:1415.5px;width:479px;height:58.6px;box-sizing:border-box;border:2px solid #d3d3d3;border-radius:4px;background:#fff"></div>
<div class="t " style="left:2128.6px;top:1429.32px;font-size:28.80px;color:#767676;transform-origin:0 0;transform:scaleX(1.0870);letter-spacing:-0.092px;">Filter (e.g. text, **/*.ts, !**/n...</div>
<svg style="left:2537.8px;top:1425.5px" width="38.4" height="38.4" viewBox="0 0 16 16"><path fill="#424242" fill-rule="evenodd" clip-rule="evenodd" d="M15 2v1.67l-5 4.759V14H6V8.429l-5-4.76V2h14zM7 8v5h2V8l5-4.76V3H2v.24L7 8z" /></svg>
<svg style="left:2609px;top:1425px" width="38.4" height="38.4" viewBox="0 0 16 16"><path fill="#424242" fill-rule="evenodd" clip-rule="evenodd" d="M9 9H4v1h5V9z M5 3l1-1h7l1 1v7l-1 1h-2v2l-1 1H3l-1-1V6l1-1h2V3zm1 2h4l1 1v4h2V3H6v2zm4 1H3v7h7V6z" /></svg>
<svg style="left:2676px;top:1432px" width="30" height="26" viewBox="0 0 30 26"><g stroke="#424242" stroke-width="2.4"><path d="M0.5 2.2 H26.8"/><path d="M0.5 9.3 H29.5"/><path d="M0.5 16.5 H22.2"/><path d="M0.5 23.6 H19.9"/></g></svg>
<div class="abs" style="left:2737.2px;top:1425px;width:2px;height:38px;background:#c8c8c8"></div>
<svg style="left:2769px;top:1428.6px" width="32" height="30" viewBox="0 0 32 30"><g fill="none" stroke="#424242" stroke-width="2.4"><path d="M2.4 10 V1.8 H10.5"/><path d="M20.5 1.8 H28.7 V10"/><path d="M28.7 19.5 V27.8 H20.5"/><path d="M10.5 27.8 H2.4 V19.5"/></g></svg>
<svg style="left:2836.1px;top:1432.8px" width="22" height="22" viewBox="0 0 22 22"><path d="M1.6 1.6 L20.4 20.4 M20.4 1.6 L1.6 20.4" fill="none" stroke="#424242" stroke-width="2.4"/></svg>
</body></html>
